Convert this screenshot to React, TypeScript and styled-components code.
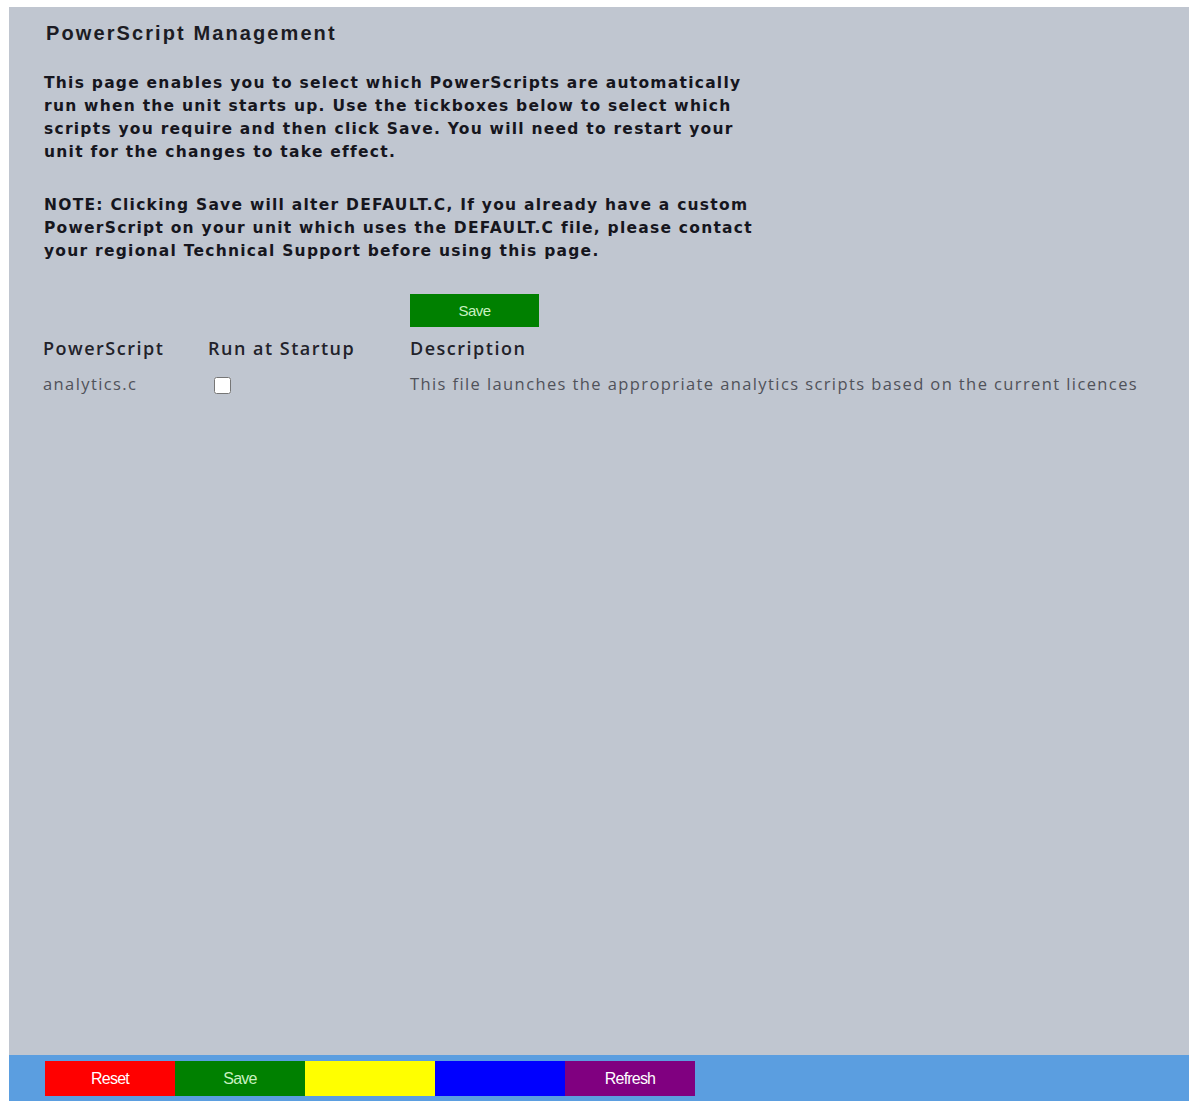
import styled, { createGlobalStyle } from 'styled-components';

const GlobalStyle = createGlobalStyle`
  html, body {
    margin: 0;
    padding: 0;
    background: #ffffff;
  }
  #root {
    min-height: 1101px;
  }
`;

const Page = styled.div`
  box-sizing: border-box;
  min-height: 1101px;
  padding: 7px 4px 0 9px;
  display: flex;
`;

const Panel = styled.div`
  flex: 1;
  display: flex;
  flex-direction: column;
  background: #c0c6d0;
`;

const Content = styled.div`
  flex: 1;
  padding: 14px 0 0 34px;
`;

const Heading = styled.h1`
  margin: 0 0 0 3px;
  font-family: 'Liberation Sans', Arial, sans-serif;
  font-size: 20px;
  font-weight: 700;
  letter-spacing: 2.1px;
  color: #1c1c24;
  line-height: 24px;
`;

const Intro = styled.p<{ $top: number }>`
  margin: ${(p) => p.$top}px 0 0 1px;
  font-family: 'DejaVu Sans', Verdana, sans-serif;
  font-size: 15.5px;
  font-weight: 700;
  line-height: 23px;
  letter-spacing: 1.25px;
  color: #16161e;
  white-space: nowrap;
`;

const TableBlock = styled.div`
  margin-top: 31px;
  display: grid;
  grid-template-columns: 165px 202px 1fr;
  font-family: 'Open Sans', sans-serif;
`;

const SaveCell = styled.div`
  grid-column: 3;
`;

const TopButton = styled.button`
  width: 129px;
  height: 33px;
  border: none;
  background: #008000;
  color: #c8f0c0;
  font-family: 'Liberation Sans', Arial, sans-serif;
  font-size: 15px;
  letter-spacing: -0.6px;
  padding: 0;
`;

const HeadCell = styled.div`
  padding-top: 8px;
  font-size: 18px;
  font-weight: 600;
  letter-spacing: 1.5px;
  color: #22222a;
  line-height: 26px;
`;

const RowCell = styled.div`
  padding-top: 11px;
  font-size: 16.5px;
  letter-spacing: 1.4px;
  color: #50525a;
  line-height: 24px;
  display: flex;
  align-items: center;
  white-space: nowrap;
`;

const Tick = styled.input`
  margin: 3px 0 0 6px;
  width: 17px;
  height: 17px;
`;

const Footer = styled.div`
  height: 46px;
  background: #5b9ee0;
  padding: 6px 0 0 36px;
  box-sizing: border-box;
  display: flex;
  align-items: flex-start;
`;

const BarButton = styled.button<{ $bg: string; $fg: string }>`
  width: 130px;
  height: 35px;
  border: none;
  padding: 0;
  background: ${(p) => p.$bg};
  color: ${(p) => p.$fg};
  font-family: 'Liberation Sans', Arial, sans-serif;
  font-size: 16px;
  letter-spacing: -0.8px;
`;

const bar = [
  { label: 'Reset', bg: '#ff0000', fg: '#ffffff' },
  { label: 'Save', bg: '#008000', fg: '#c8f0c0' },
  { label: '', bg: '#ffff00', fg: '#ffffff' },
  { label: '', bg: '#0000ff', fg: '#ffffff' },
  { label: 'Refresh', bg: '#800080', fg: '#ffffff' },
];

export default function App() {
  return (
    <>
      <GlobalStyle />
      <Page>
        <Panel>
          <Content>
            <Heading>PowerScript Management</Heading>
            <Intro $top={27}>
              This page enables you to select which PowerScripts are automatically
              <br />
              run when the unit starts up. Use the tickboxes below to select which
              <br />
              scripts you require and then click Save. You will need to restart your
              <br />
              unit for the changes to take effect.
            </Intro>
            <Intro $top={30}>
              NOTE: Clicking Save will alter DEFAULT.C, If you already have a custom
              <br />
              PowerScript on your unit which uses the DEFAULT.C file, please contact
              <br />
              your regional Technical Support before using this page.
            </Intro>
            <TableBlock>
              <SaveCell>
                <TopButton>Save</TopButton>
              </SaveCell>
              <HeadCell>PowerScript</HeadCell>
              <HeadCell>Run at Startup</HeadCell>
              <HeadCell>Description</HeadCell>
              <RowCell>analytics.c</RowCell>
              <RowCell>
                <Tick type="checkbox" />
              </RowCell>
              <RowCell>
                This file launches the appropriate analytics scripts based on the current licences
              </RowCell>
            </TableBlock>
          </Content>
          <Footer>
            {bar.map((b, i) => (
              <BarButton key={i} $bg={b.bg} $fg={b.fg}>
                {b.label}
              </BarButton>
            ))}
          </Footer>
        </Panel>
      </Page>
    </>
  );
}
